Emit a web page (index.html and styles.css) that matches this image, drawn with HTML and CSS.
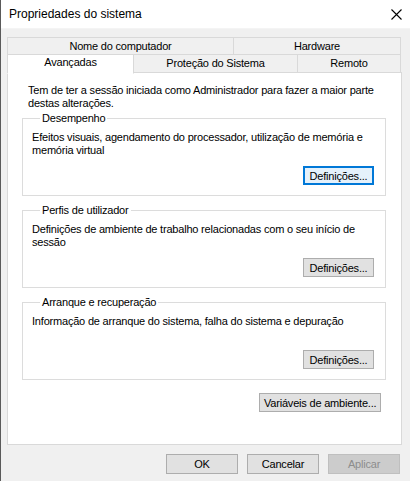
FILE: index.html
```html
<!DOCTYPE html>
<html lang="pt">
<head>
<meta charset="UTF-8">
<meta name="viewport" content="width=device-width, initial-scale=1.0">
<title>Propriedades do sistema</title>
<link rel="stylesheet" href="styles.css">
</head>
<body>
<div class="window">
    <div class="titlebar">
        <span class="title">Propriedades do sistema</span>
        <span class="close">
            <svg width="11" height="11" viewBox="0 0 11 11"><path d="M0.5 0.5 L10.5 10.5 M10.5 0.5 L0.5 10.5" stroke="#000" stroke-width="1.1" fill="none"/></svg>
        </span>
    </div>

    <div class="content">
        <div class="tabs">
            <div class="tab-row">
                <div class="tab tab-nome">Nome do computador</div>
                <div class="tab tab-hardware">Hardware</div>
            </div>
            <div class="tab-row tab-row-front">
                <div class="tab tab-avancadas active">Avançadas</div>
                <div class="tab tab-protecao">Proteção do Sistema</div>
                <div class="tab tab-remoto">Remoto</div>
            </div>
        </div>

        <div class="panel">
            <div class="intro">Tem de ter a sessão iniciada como Administrador para fazer a maior parte destas alterações.</div>

            <fieldset class="group">
                <legend>Desempenho</legend>
                <div class="desc">Efeitos visuais, agendamento do processador, utilização de memória e memória virtual</div>
                <div class="group-buttons">
                    <button class="button focused">Definições...</button>
                </div>
            </fieldset>

            <fieldset class="group">
                <legend>Perfis de utilizador</legend>
                <div class="desc">Definições de ambiente de trabalho relacionadas com o seu início de sessão</div>
                <div class="group-buttons">
                    <button class="button">Definições...</button>
                </div>
            </fieldset>

            <fieldset class="group">
                <legend>Arranque e recuperação</legend>
                <div class="desc">Informação de arranque do sistema, falha do sistema e depuração</div>
                <div class="group-buttons">
                    <button class="button">Definições...</button>
                </div>
            </fieldset>

            <div class="env-row">
                <button class="button env-btn">Variáveis de ambiente...</button>
            </div>
        </div>

        <div class="footer">
            <button class="button dlg-btn">OK</button>
            <button class="button dlg-btn">Cancelar</button>
            <button class="button dlg-btn disabled">Aplicar</button>
        </div>
    </div>
</div>
</body>
</html>
```

FILE: styles.css
```css
body {
    margin: 0;
    padding: 0;
    font-family: "Liberation Sans", Arial, sans-serif;
    font-size: 11px;
    letter-spacing: -0.2px;
    color: #000;
    background-color: #f0f0f0;
}

.window {
    width: 410px;
    height: 481px;
    box-sizing: border-box;
    border-left: 1px solid #5a5a5a;
    background-color: #f0f0f0;
    overflow: hidden;
}

.titlebar {
    height: 28px;
    background-color: #fff;
    display: flex;
    align-items: center;
    justify-content: space-between;
    padding: 0 8px 0 8px;
    border-bottom: 1px solid #f4f4f4;
}

.title {
    font-size: 12px;
    letter-spacing: 0;
    color: #000;
}

.close {
    display: flex;
    width: 11px;
    height: 11px;
}

.content {
    padding: 8px 8px 0 6px;
}

/* tabs */
.tabs {
    display: flex;
    flex-direction: column;
}

.tab-row {
    display: flex;
    height: 18px;
}

.tab-row-front {
    margin-top: -1px;
}

.tab {
    box-sizing: border-box;
    height: 19px;
    border: 1px solid #d9d9d9;
    background-color: #f0f0f0;
    text-align: center;
    line-height: 17px;
    margin-right: -1px;
}

.tab-nome { width: 227px; }
.tab-hardware { width: 168px; }
.tab-avancadas { width: 127px; }
.tab-protecao { width: 165px; }
.tab-remoto { width: 104px; }

.tab.active {
    background-color: #fff;
    border-bottom-color: #fff;
    height: 20px;
    line-height: 15px;
    position: relative;
    z-index: 1;
}

/* panel */
.panel {
    box-sizing: border-box;
    height: 373px;
    background-color: #fff;
    border: 1px solid #d9d9d9;
    padding: 11px 15px 0 14px;
}

.intro {
    line-height: 13px;
    padding-left: 6px;
    margin-bottom: 2px;
}

.group {
    margin: 0 0 8px 0;
    padding: 0 11px 10px 9px;
    border: 1px solid #dcdcdc;
}

.group legend {
    padding: 0 2px;
    margin-left: 8px;
    line-height: 13px;
}

.desc {
    line-height: 13px;
    margin-top: 6px;
    min-height: 26px;
}

.group-buttons {
    display: flex;
    justify-content: flex-end;
    margin-top: 9px;
}

.button {
    box-sizing: border-box;
    height: 20px;
    padding: 0 4px;
    background-color: #e1e1e1;
    border: 1px solid #adadad;
    border-radius: 0;
    font-family: "Liberation Sans", Arial, sans-serif;
    font-size: 11px;
    letter-spacing: -0.2px;
    white-space: nowrap;
    color: #000;
    outline: none;
    cursor: default;
}

.group-buttons .button {
    width: 71px;
    height: 19px;
}

.button.focused {
    background-color: #e5f1fb;
    border: 1px solid #0078d7;
    box-shadow: inset 0 0 0 1px #0078d7;
}

.env-row {
    display: flex;
    justify-content: flex-end;
    margin-top: 13px;
    padding-right: 5px;
}

.env-btn {
    width: 122px;
    height: 19px;
}

/* dialog buttons */
.footer {
    display: flex;
    justify-content: flex-end;
    gap: 9px;
    margin-top: 9px;
    padding-right: 2px;
}

.dlg-btn {
    width: 72px;
}

.button.disabled {
    background-color: #cccccc;
    border-color: #bfbfbf;
    color: #8d8d8d;
}
```
